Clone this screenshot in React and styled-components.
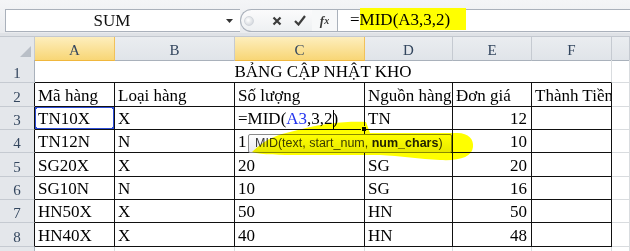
import React from 'react'
import styled, { createGlobalStyle } from 'styled-components'

const GlobalStyle = createGlobalStyle`
  html, body {
    margin: 0;
    padding: 0;
    background: #fff;
  }
  body {
    width: 630px;
    height: 251px;
    overflow: hidden;
    font-family: "Liberation Serif", "Times New Roman", serif;
  }
`

const COLS = '35px 80px 120px 130px 88px 79px 80px 18px'

const Page = styled.div`
  position: relative;
  width: 630px;
  height: 251px;
  overflow: hidden;
`

/* ---------- formula bar ---------- */

const Top = styled.div`
  height: 37px;
  box-sizing: border-box;
  padding: 9px 0 0 5px;
  display: flex;
  align-items: flex-start;
  background: linear-gradient(#f4f5f7, #e9ebee);
  border-bottom: 1px solid #c3c8cf;
  box-shadow: inset 0 -3px 0 #dfe2e6;
`

const NameBox = styled.div`
  width: 235px;
  height: 23px;
  box-sizing: border-box;
  display: flex;
  align-items: center;
  background: #fff;
  border: 1px solid #aab1bb;
  border-right: none;
`

const Name = styled.div`
  flex: 1;
  text-align: center;
  font-size: 17px;
  line-height: 21px;
  color: #111;
`

const Arrow = styled.div`
  width: 22px;
  display: flex;
  justify-content: center;
  svg { display: block; }
`

const Buttons = styled.div`
  width: 72px;
  height: 23px;
  box-sizing: border-box;
  display: flex;
  align-items: center;
  gap: 12px;
  padding-left: 3px;
  background: linear-gradient(#fbfbfc, #eef0f2);
  border: 1px solid #aab1bb;
  border-right: none;
  border-radius: 12px 0 0 12px;
`

const Grip = styled.div`
  width: 8px;
  height: 8px;
  border-radius: 50%;
  background: radial-gradient(circle at 40% 40%, #fff, #c9ced5);
  border: 1px solid #d2d6dc;
  margin-right: 6px;
`

const Fx = styled.div`
  width: 25px;
  height: 23px;
  box-sizing: border-box;
  display: flex;
  align-items: center;
  justify-content: center;
  background: #f7f8f9;
  border-top: 1px solid #aab1bb;
  border-bottom: 1px solid #aab1bb;
  font-style: italic;
  font-weight: bold;
  font-size: 13px;
  color: #3a3a3a;
  span { font-size: 10px; }
`

const Formula = styled.div`
  flex: 1;
  height: 23px;
  box-sizing: border-box;
  background: #fff;
  border: 1px solid #aab1bb;
  border-right: none;
  padding-left: 12px;
  font-size: 17px;
  line-height: 20px;
  color: #000;
`

const Marker = styled.span`
  background: #ffff00;
  padding: 2px 16px 1px 0;
`

/* ---------- sheet ---------- */

const Row = styled.div`
  display: grid;
  grid-template-columns: ${COLS};
  height: ${p => p.$h}px;
`

const Corner = styled.div`
  background: #e4e7eb;
  border-right: 1px solid #c5cad1;
  border-bottom: 1px solid #a9b1bb;
  display: flex;
  align-items: flex-end;
  justify-content: flex-end;
  padding: 0 3px 3px 0;
  svg { display: block; }
`

const ColHead = styled.div`
  box-sizing: border-box;
  display: flex;
  justify-content: center;
  padding-top: 3px;
  font-size: 15px;
  line-height: 20px;
  color: #33465e;
  background: ${p => p.$active
    ? 'linear-gradient(#fdeebd, #f8d676)'
    : 'linear-gradient(#eaedf0, #e0e4e9)'};
  border-right: 1px solid ${p => (p.$active ? '#f1c15a' : '#c5cad1')};
  border-bottom: 1px solid ${p => (p.$active ? '#f0b73d' : '#a9b1bb')};
`

const RowHead = styled.div`
  box-sizing: border-box;
  display: flex;
  align-items: flex-end;
  justify-content: center;
  font-size: 15px;
  line-height: 18px;
  color: #33465e;
  background: #e4e7eb;
  border-right: 1px solid ${p => (p.$dark ? '#111' : '#a9b1bb')};
  border-bottom: 1px solid #c5cad1;
`

const Cell = styled.div`
  position: relative;
  box-sizing: border-box;
  display: flex;
  align-items: flex-end;
  justify-content: ${p => (p.$right ? 'flex-end' : 'flex-start')};
  padding: 0 ${p => (p.$right ? '4px' : '3px')} 0 3px;
  font-size: 17px;
  line-height: 20px;
  color: #000;
  white-space: nowrap;
  overflow: hidden;
  border-right: 1px solid ${p => (p.$box ? '#111' : '#d9dcdf')};
  border-bottom: 1px solid ${p => (p.$box ? '#111' : '#d9dcdf')};
`

const EditCell = styled(Cell)`
  overflow: visible;
`

const Title = styled(Cell)`
  grid-column: span 6;
  justify-content: center;
  border-right: 1px solid #d9dcdf;
  border-bottom: 1px solid #111;
`

const Ref = styled.span`
  color: #2233ee;
`

const Caret = styled.span`
  display: inline-block;
  width: 1px;
  height: 19px;
  background: #000;
  margin: 0 -1px 0 0;
  vertical-align: -4px;
`

const Selection = styled.div`
  position: absolute;
  top: -1px;
  left: -1px;
  right: -1px;
  bottom: -1px;
  border: 2px solid #2f4fd8;
`

const Handle = styled.div`
  position: absolute;
  width: 5px;
  height: 5px;
  background: #2f4fd8;
  ${p => (p.$top ? 'top: -4px;' : 'bottom: -4px;')}
  ${p => (p.$left ? 'left: -4px;' : 'right: -4px;')}
`

const FillDot = styled.div`
  position: absolute;
  right: -3px;
  bottom: -3px;
  width: 4px;
  height: 4px;
  background: #111;
  border: 1px solid #fff;
`

const Tip = styled.div`
  position: absolute;
  left: 248px;
  top: 134px;
  width: 204px;
  height: 19px;
  box-sizing: border-box;
  padding-left: 6px;
  background: linear-gradient(#ffffff, #e8e9ef);
  border: 1px solid #8a8a8a;
  border-radius: 2px;
  font-family: "Liberation Sans", Arial, sans-serif;
  font-size: 12.5px;
  line-height: 17px;
  color: #3a3a3a;
  white-space: nowrap;
  b { color: #222; }
`

const Highlight = styled.svg`
  position: absolute;
  left: 0;
  top: 0;
  pointer-events: none;
  mix-blend-mode: multiply;
`

const cols = ['A', 'B', 'C', 'D', 'E', 'F']
const heights = [24, 23, 23, 24, 23, 23, 24]

// D4 sits under the function tooltip, so nothing of it shows
const rows = [
  ['Mã hàng', 'Loại hàng', 'Số lượng', 'Nguồn hàng', 'Đơn giá', 'Thành Tiền'],
  ['TN10X', 'X', null, 'TN', '12', ''],
  ['TN12N', 'N', '1', '', '10', ''],
  ['SG20X', 'X', '20', 'SG', '20', ''],
  ['SG10N', 'N', '10', 'SG', '16', ''],
  ['HN50X', 'X', '50', 'HN', '50', ''],
  ['HN40X', 'X', '40', 'HN', '48', ''],
]

const App = () => {
  return (
    <Page>
      <GlobalStyle />
      <Top>
        <NameBox>
          <Name>SUM</Name>
          <Arrow>
            <svg width="7" height="4" viewBox="0 0 7 4"><path d="M0 0h7L3.5 4z" fill="#333" /></svg>
          </Arrow>
        </NameBox>
        <Buttons>
          <Grip />
          <svg width="10" height="10" viewBox="0 0 10 10">
            <path d="M1.5 1.5l7 7M8.5 1.5l-7 7" stroke="#3c3c3c" strokeWidth="2.2" />
          </svg>
          <svg width="12" height="11" viewBox="0 0 12 11">
            <path d="M1 6l3.5 3.5L11 1" stroke="#3c3c3c" strokeWidth="2.2" fill="none" />
          </svg>
        </Buttons>
        <Fx>f<span>x</span></Fx>
        <Formula>=<Marker>MID(A3,3,2)</Marker></Formula>
      </Top>

      <Row $h={23}>
        <Corner>
          <svg width="11" height="11" viewBox="0 0 11 11"><path d="M11 0v11H0z" fill="#b9bfc7" /></svg>
        </Corner>
        {cols.map(c => (
          <ColHead key={c} $active={c === 'A' || c === 'C'}>{c}</ColHead>
        ))}
        <ColHead />
      </Row>

      <Row $h={23}>
        <RowHead>1</RowHead>
        <Title>BẢNG CẬP NHẬT KHO</Title>
        <Cell />
      </Row>

      {rows.map((r, i) => (
        <Row key={i} $h={heights[i]}>
          <RowHead $dark>{i + 2}</RowHead>
          {r.map((v, j) => {
            if (v === null) {
              return (
                <EditCell key={j} $box>
                  =MID(<Ref>A3</Ref>,3,2<Caret />)
                  <FillDot />
                </EditCell>
              )
            }
            return (
              <Cell key={j} $box $right={j === 4 && i > 0}>
                {v}
                {i === 1 && j === 0 && (
                  <Selection>
                    <Handle $top $left />
                    <Handle $top />
                    <Handle $left />
                    <Handle />
                  </Selection>
                )}
              </Cell>
            )
          })}
          <Cell />
        </Row>
      ))}

      <Row $h={5}>
        <RowHead />
        {cols.map(c => <Cell key={c} />)}
        <Cell />
      </Row>

      <Tip>MID(text, start_num, <b>num_chars</b>)</Tip>

      <Highlight width="630" height="251" viewBox="0 0 630 251">
        <path
          d="M252 152 C258 146 268 138 282 134 L306 128 C322 124 346 121 366 122 L370 133 L455 133 C468 132 474 139 473 147 C472 157 460 161 440 160 C420 159 400 156 380 155 L300 155 C280 155 262 155 252 152 Z"
          fill="#ffff00"
        />
      </Highlight>
    </Page>
  )
}

export default App
